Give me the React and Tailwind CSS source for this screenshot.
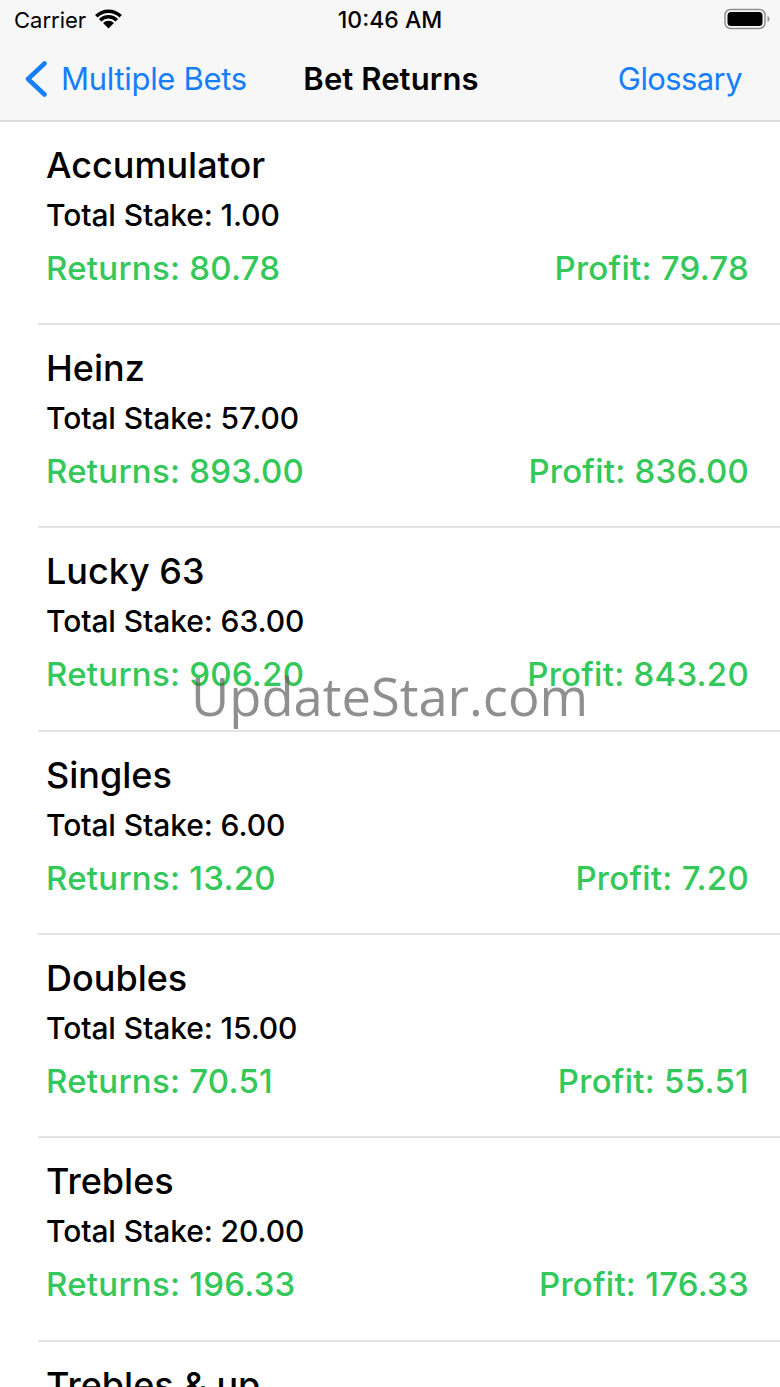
import React from 'react';

const bets = [
  { name: 'Accumulator', stake: '1.00', returns: '80.78', profit: '79.78' },
  { name: 'Heinz', stake: '57.00', returns: '893.00', profit: '836.00' },
  { name: 'Lucky 63', stake: '63.00', returns: '906.20', profit: '843.20' },
  { name: 'Singles', stake: '6.00', returns: '13.20', profit: '7.20' },
  { name: 'Doubles', stake: '15.00', returns: '70.51', profit: '55.51' },
  { name: 'Trebles', stake: '20.00', returns: '196.33', profit: '176.33' },
  { name: 'Trebles & up', stake: '', returns: '', profit: '' },
];

const BetRow = ({ bet }) => (
  <div className="ml-[38px] h-[203.4px] border-b-2 border-[#e4e4e6] pl-[8px] pr-[31px] pt-[21px]">
    <div className="h-[44px] text-[36px] leading-[44px] font-medium text-black">{bet.name}</div>
    {bet.stake && (
      <>
        <div className="mt-[10px] h-[36px] text-[30px] leading-[36px] font-medium text-black tracking-[-0.1px]">Total Stake: {bet.stake}</div>
        <div className="mt-[15px] flex justify-between text-[33px] leading-[40px] font-medium text-[#34c759] tracking-[0.25px]">
          <span>Returns: {bet.returns}</span>
          <span>Profit: {bet.profit}</span>
        </div>
      </>
    )}
  </div>
);

const App = () => (
  <div className="relative h-[1387px] w-[780px] overflow-hidden bg-white font-['Inter',sans-serif]">
    {/* Status + nav bar */}
    <div className="h-[121.5px] border-b-2 border-[#dcdcde] bg-[#f7f7f8]">
      <div className="grid h-[40px] grid-cols-[1fr_auto_1fr] items-center px-[10.5px]">
        <div className="flex items-center gap-[9px] pl-[3.5px]">
          <span className="text-[22px] leading-[28px] text-black">Carrier</span>
          <svg width="27" height="20" viewBox="0 0 27 20" className="mb-[3px]">
            <path d="M1.300 7.300A17.250 17.250 0 0 1 25.700 7.300" fill="none" stroke="#000" strokeWidth="3.500" />
            <path d="M5.190 11.190A11.750 11.750 0 0 1 21.810 11.190" fill="none" stroke="#000" strokeWidth="3.500" />
            <path d="M13.500 19.500 8.050 14.050A7.700 7.700 0 0 1 18.950 14.050Z" fill="#000" />
          </svg>
        </div>
        <span className="text-[23px] leading-[28px] font-medium text-black">10:46 AM</span>
        <div className="flex justify-end">
          <svg width="46" height="22" viewBox="0 0 46 22" className="mb-[3px]">
            <rect x="1" y="1.500" width="40" height="19" rx="5.500" fill="none" stroke="#8e8e8e" strokeWidth="1.500" />
            <rect x="3.500" y="4" width="35" height="14" rx="3.500" fill="#000" />
            <path d="M43.500 8v6c1.200-.5 2-1.700 2-3s-.8-2.500-2-3z" fill="#8e8e8e" />
          </svg>
        </div>
      </div>
      <div className="flex h-[79px] items-center pl-[24px] pr-[38px] pb-[1px]">
        <div className="flex w-[241px] items-center gap-[13px]">
          <svg width="24" height="36" viewBox="0 0 24 36">
            <path d="M20.500 2.500 4 18l16.500 15.500" fill="none" stroke="#147efb" strokeWidth="4.500" strokeLinecap="round" strokeLinejoin="round" />
          </svg>
          <span className="whitespace-nowrap text-[31px] leading-[40px] text-[#147efb] tracking-[-0.3px]">Multiple Bets</span>
        </div>
        <span className="flex-1 text-center text-[31px] leading-[40px] font-semibold text-black tracking-[0.1px]">Bet Returns</span>
        <span className="w-[225px] text-right text-[31px] leading-[40px] text-[#147efb] tracking-[-0.6px]">Glossary</span>
      </div>
    </div>

    {/* Bet list */}
    <div>
      {bets.map((bet) => (
        <BetRow key={bet.name} bet={bet} />
      ))}
    </div>

    {/* Watermark */}
    <div className="absolute left-[191px] top-[661px] whitespace-nowrap font-['Open_Sans',sans-serif] text-[52.5px] leading-[70px] text-[#5f5f5f]/70">UpdateStar.com</div>
  </div>
);

export default App;
